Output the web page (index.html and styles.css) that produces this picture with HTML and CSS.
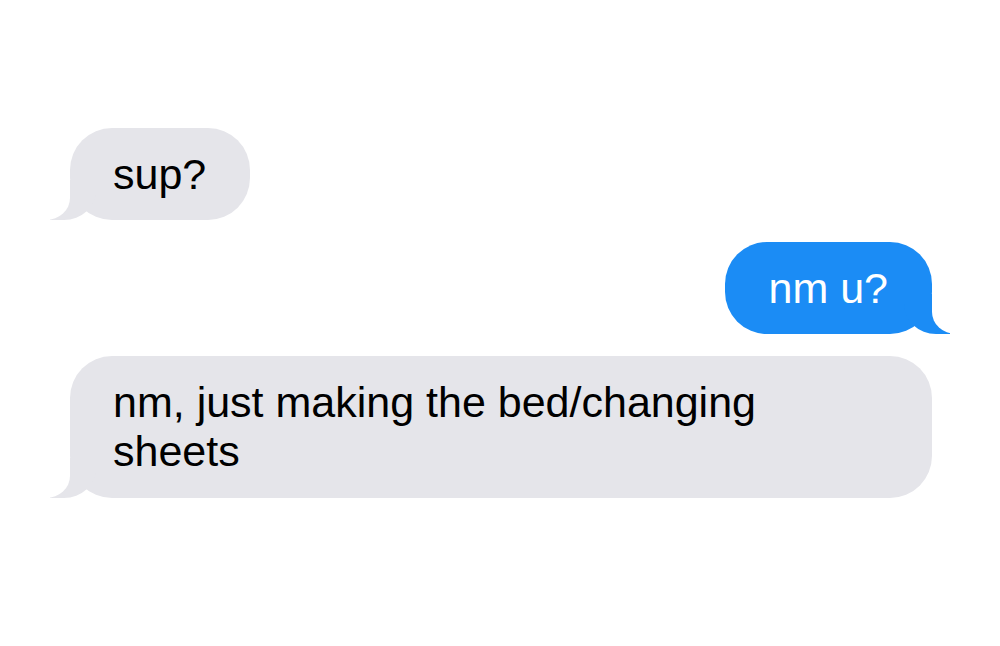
FILE: index.html
```html
<!DOCTYPE html>
<html>
<head>
  <title>Messages</title>
  <link rel="stylesheet" href="styles.css">
</head>
<body>
  <div class="chat">
    <div class="msg them">sup?</div>
    <div class="msg me">nm u?</div>
    <div class="msg them wide">nm, just making the bed/changing sheets</div>
  </div>
</body>
</html>
```

FILE: styles.css
```css
body { margin: 0; background: #fff; font-family: "Liberation Sans", Arial, sans-serif; }
.chat { display: flex; flex-direction: column; align-items: flex-start; gap: 22px; padding: 128px 68px 0 70px; }
.msg { position: relative; font-size: 43px; line-height: 48px; padding: 22px 44px 22px 43px; border-radius: 42px; }
.them { background: #e5e5ea; color: #000; align-self: flex-start; }
.me { background: #1b8cf5; color: #fff; align-self: flex-end; }
.wide { align-self: stretch; padding-right: 120px; line-height: 49px; }

/* bubble tails */
.msg::before, .msg::after { content: ""; position: absolute; bottom: 0; height: 40px; }
.them::before { left: -20px; width: 46px; background: #e5e5ea; border-bottom-right-radius: 32px 30px; z-index: 0; }
.them::after { left: -30px; width: 30px; background: #fff; border-bottom-right-radius: 24px 22px; z-index: 1; }
.me::before { right: -18px; width: 46px; background: #1b8cf5; border-bottom-left-radius: 32px 30px; z-index: 0; }
.me::after { right: -28px; width: 28px; background: #fff; border-bottom-left-radius: 24px 22px; z-index: 1; }
```
